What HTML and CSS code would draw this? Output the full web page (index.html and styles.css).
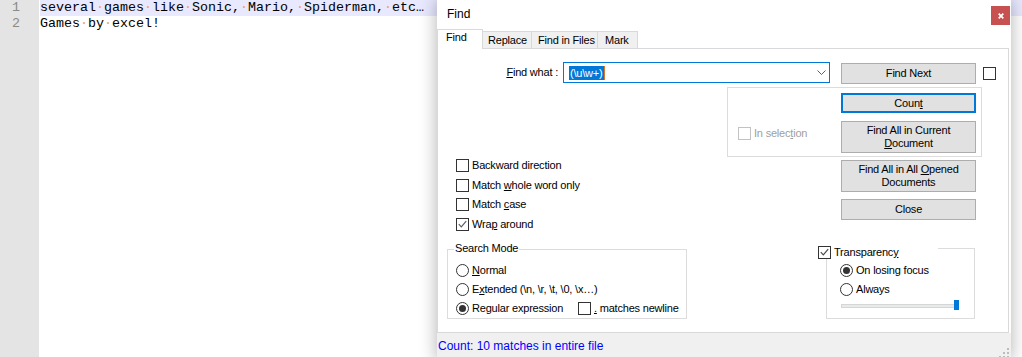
FILE: index.html
```html
<!DOCTYPE html>
<html>
<head>
<meta charset="utf-8">
<title>Find</title>
<link rel="stylesheet" href="styles.css">
</head>
<body>
<div class="editor">
  <div class="gutter"><div class="ln">1</div><div class="ln">2</div></div>
  <div class="text">
    <div class="line cur">several<span class="ws">·</span>games<span class="ws">·</span>like<span class="ws">·</span>Sonic,<span class="ws">·</span>Mario,<span class="ws">·</span>Spiderman,<span class="ws">·</span>etc…</div>
    <div class="line">Games<span class="ws">·</span>by<span class="ws">·</span>excel!</div>
  </div>
</div>

<div class="dialog">
  <div class="titlebar">
    <span class="title">Find</span>
    <span class="close"><svg width="6" height="6" viewBox="0 0 6 6"><path d="M0.7 0.7 L5.3 5.3 M5.3 0.7 L0.7 5.3" stroke="#fff" stroke-width="1.7" fill="none"/></svg></span>
  </div>
  <div class="tabs">
    <div class="tab active t-find">Find</div>
    <div class="tab t-rep">Replace</div>
    <div class="tab t-fif">Find in Files</div>
    <div class="tab t-mark">Mark</div>
  </div>
  <div class="panel">
    <div class="findrow">
      <span class="fw-label"><u>F</u>ind what :</span>
      <div class="combo">
        <span class="sel">(\u\w+)</span><span class="caret"></span>
        <svg class="chev" width="9" height="5" viewBox="0 0 9 5"><polyline points="0.5,0.5 4.5,4.5 8.5,0.5" fill="none" stroke="#606060" stroke-width="1"/></svg>
      </div>
      <div class="btn btn-next"><span>Find Next</span></div>
      <span class="cb cb-top"></span>
    </div>

    <div class="selbox">
      <div class="opt disabled insel"><span class="cb"></span><span>In selec<u>t</u>ion</span></div>
      <div class="btncol">
        <div class="btn btn-count"><span>Coun<u>t</u></span></div>
        <div class="btn btn-tall btn-cur"><span>Find All in Current<br><u>D</u>ocument</span></div>
      </div>
    </div>

    <div class="mid">
      <div class="opts">
        <div class="opt"><span class="cb"></span><span>Backward direction</span></div>
        <div class="opt"><span class="cb"></span><span>Match <u>w</u>hole word only</span></div>
        <div class="opt"><span class="cb"></span><span>Match <u>c</u>ase</span></div>
        <div class="opt"><span class="cb"><svg width="11" height="11" viewBox="0 0 11 11"><polyline points="1.8,5.2 4.3,7.8 9.2,2.2" fill="none" stroke="#5e5e5e" stroke-width="1.2"/></svg></span><span>Wra<u>p</u> around</span></div>
      </div>
      <div class="btncol btncol-mid">
        <div class="btn btn-tall"><span>Find All in All <u>O</u>pened<br>Documents</span></div>
        <div class="btn btn-close"><span>Close</span></div>
      </div>
    </div>

    <div class="groups">
      <div class="group search">
        <span class="legend">Search Mode</span>
        <div class="opt"><span class="rb"></span><span><u>N</u>ormal</span></div>
        <div class="opt"><span class="rb"></span><span>E<u>x</u>tended (\n, \r, \t, \0, \x…)</span></div>
        <div class="opt">
          <span class="inl rx"><span class="rb on"></span><span>Re<u>g</u>ular expression</span></span>
          <span class="inl"><span class="cb"></span><span><u>.</u> matches newline</span></span>
        </div>
      </div>
      <div class="group trans">
        <div class="opt tlabel"><span class="cb"><svg width="11" height="11" viewBox="0 0 11 11"><polyline points="1.8,5.2 4.3,7.8 9.2,2.2" fill="none" stroke="#4a4a4a" stroke-width="1.2"/></svg></span><span>Transparenc<u>y</u></span></div>
        <div class="opt"><span class="rb on"></span><span>On losing focus</span></div>
        <div class="opt"><span class="rb"></span><span>Always</span></div>
        <div class="slider"><span class="thumb"></span></div>
      </div>
    </div>
  </div>
  <div class="status">
    <span class="msg">Count: 10 matches in entire file</span>
    <svg class="grip" width="10" height="10" viewBox="0 0 10 10">
      <rect x="8" y="0" width="2" height="2" fill="#bcbcbc"/>
      <rect x="4" y="4" width="2" height="2" fill="#bcbcbc"/>
      <rect x="8" y="4" width="2" height="2" fill="#bcbcbc"/>
      <rect x="0" y="8" width="2" height="2" fill="#bcbcbc"/>
      <rect x="4" y="8" width="2" height="2" fill="#bcbcbc"/>
      <rect x="8" y="8" width="2" height="2" fill="#bcbcbc"/>
    </svg>
  </div>
</div>
</body>
</html>
```

FILE: styles.css
```css
* { box-sizing: border-box; }
html, body { margin: 0; padding: 0; }
body {
  width: 1022px;
  height: 357px;
  overflow: hidden;
  position: relative;
  background: #fff;
  font-family: "Liberation Sans", Arial, sans-serif;
}

/* ---------- editor ---------- */
.editor { display: flex; height: 357px; }
.gutter {
  width: 39px;
  background: #e4e4e4;
  color: #8a8a8a;
  font: 13.333px/16px "Liberation Mono", "Courier New", monospace;
  text-align: right;
}
.ln { padding-right: 19px; height: 16px; }
.text {
  flex: 1;
  padding-left: 1px;
  font: 13.333px/16px "Liberation Mono", "Courier New", monospace;
  color: #000;
  white-space: nowrap;
}
.line { height: 16px; }
.line.cur { background: #e8e8ff; }
.ws { color: #f5a050; }

/* ---------- dialog ---------- */
.dialog {
  position: absolute;
  left: 437px;
  top: 0;
  width: 574px;
  height: 360px;
  background: #fff;
  box-shadow: 0 0 16px 1px rgba(0, 0, 0, 0.28);
  display: flex;
  flex-direction: column;
  font-size: 11px;
  letter-spacing: -0.2px;
  color: #000;
}

.titlebar {
  height: 29px;
  display: flex;
  justify-content: space-between;
  align-items: flex-start;
}
.title {
  font-size: 12px;
  letter-spacing: 0;
  line-height: 14px;
  margin: 7px 0 0 10px;
}
.close {
  width: 19px;
  height: 19px;
  margin: 6px 1px 0 0;
  background: #c75050;
  display: flex;
  align-items: center;
  justify-content: center;
}

.tabs {
  height: 19px;
  display: flex;
  align-items: flex-end;
  position: relative;
  z-index: 1;
}
.tab {
  height: 17px;
  border: 1px solid #d9d9d9;
  border-bottom: 0;
  background: #f0f0f0;
  padding: 2px 0 0 6px;
  line-height: 13px;
  margin-left: -1px;
  white-space: nowrap;
}
.tab.active {
  height: 20px;
  margin-bottom: -1px;
  margin-left: 0;
  background: #fff;
  padding: 1px 0 0 8px;
}
.t-find { width: 46px; }
.t-rep { width: 50px; padding-left: 5px; }
.t-fif { width: 67px; }
.t-mark { width: 41px; padding-left: 7px; }

.panel {
  height: 285px;
  border: 1px solid #d9d9d9;
  margin-right: 2px;
  display: flex;
  flex-direction: column;
}

/* find row */
.findrow {
  margin-top: 13px;
  height: 21px;
  display: flex;
  align-items: flex-start;
}
.fw-label {
  width: 120px;
  text-align: right;
  line-height: 13px;
  margin-top: 4px;
  white-space: nowrap;
}
.combo {
  margin-left: 5px;
  width: 267px;
  height: 21px;
  border: 1px solid #0078d7;
  display: flex;
  align-items: center;
  padding-left: 5px;
}
.sel {
  background: #0078d7;
  color: #fff;
  line-height: 14px;
  padding: 0 1px;
}
.caret {
  width: 1px;
  height: 14px;
  background: #d9782c;
}
.chev { margin-left: auto; margin-right: 3px; }

.btn {
  width: 135px;
  background: #e1e1e1;
  border: 1px solid #adadad;
  display: flex;
  align-items: center;
  justify-content: center;
  text-align: center;
  line-height: 13px;
  white-space: nowrap;
}
.btn-next { margin-left: 11px; margin-top: 1px; height: 21px; }
.cb-top { margin-left: 7px; margin-top: 5px; }

/* checkbox / radio */
.cb {
  width: 13px;
  height: 13px;
  flex: none;
  border: 1px solid #333;
  background: #fff;
  margin-right: 3px;
  display: flex;
  align-items: center;
  justify-content: center;
}
.rb {
  width: 13px;
  height: 13px;
  flex: none;
  border: 1px solid #333;
  border-radius: 50%;
  background: #fff;
  margin-right: 3px;
  display: flex;
  align-items: center;
  justify-content: center;
}
.rb.on::after {
  content: "";
  width: 7px;
  height: 7px;
  border-radius: 50%;
  background: #333;
}
.opt {
  display: flex;
  align-items: center;
  height: 19.5px;
  white-space: nowrap;
  line-height: 13px;
}
.inl { display: flex; align-items: center; }
.disabled { color: #a0a0a0; }
.disabled .cb { border-color: #c2c2c2; }

/* selection box */
.selbox {
  margin: 4px 0 0 289px;
  width: 255px;
  height: 70px;
  border: 1px solid #dcdcdc;
  display: flex;
  justify-content: space-between;
  padding: 5px 5px 0 10px;
}
.insel { height: 13px; margin-top: 34px; }
.btncol { display: flex; flex-direction: column; }
.btn-count { height: 20px; border: 2px solid #0078d7; }
.btn-tall { height: 32px; }
.btn-cur { margin-top: 8px; }

/* middle row */
.mid { display: flex; }
.opts { width: 403px; padding: 2px 0 0 18px; }
.opts .opt { align-items: flex-start; }
.btncol-mid { margin-top: 3px; }
.btn-close { height: 21px; margin-top: 7px; }

/* groups */
.groups {
  margin-top: 11px;
  padding-left: 9px;
  display: flex;
  align-items: flex-start;
}
.group {
  position: relative;
  border: 1px solid #dcdcdc;
}
.group .opt { height: 19px; }
.search {
  margin-top: 1px;
  width: 240px;
  height: 70px;
  padding: 11px 0 0 8px;
}
.legend {
  position: absolute;
  top: -8px;
  left: 6px;
  padding: 0 1px;
  background: #fff;
  line-height: 13px;
}
.rx { width: 122px; }
.trans {
  margin-left: 139px;
  width: 149px;
  height: 71px;
  padding: 12px 0 0 13px;
}
.group .tlabel {
  position: absolute;
  top: -3px;
  left: -9px;
  width: 120px;
  height: 13px;
  background: #fff;
}
.slider {
  position: relative;
  margin: 5px 0 0 1px;
  width: 118px;
  height: 4px;
  background: #e7eaea;
  border: 1px solid #d6d6d6;
}
.thumb {
  position: absolute;
  right: -1px;
  top: -5px;
  width: 5px;
  height: 10px;
  background: #0078d7;
}

/* status bar */
.status {
  flex: 1;
  background: #f0f0f0;
  display: flex;
  justify-content: space-between;
  align-items: flex-start;
  padding: 6px 2px 0 1px;
}
.msg {
  color: #0000ff;
  font-size: 12px;
  letter-spacing: 0;
  line-height: 14px;
}
.grip { margin-top: 9px; }
```
